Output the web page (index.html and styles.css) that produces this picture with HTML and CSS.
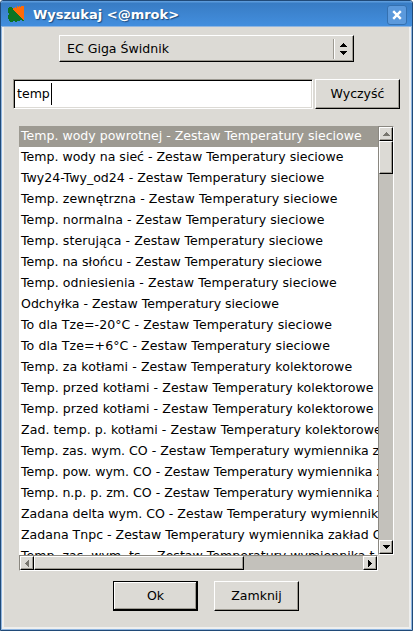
FILE: index.html
```html
<!DOCTYPE html>
<html lang="pl">
<head>
<meta charset="utf-8">
<title>Wyszukaj</title>
<link rel="stylesheet" href="styles.css">
</head>
<body>
<div class="window">
  <header class="titlebar">
    <svg class="logo" width="16" height="16" viewBox="0 0 16 16" shape-rendering="crispEdges"><path fill="#0b7424" d="M0 2h1V1h3v1h2v2l10 10v1h-2v-1h-2v1h-3v1H7v-1H5v1H2v-1H1v-2H0V9h1V7H0z"/><path fill="#ff6a08" d="M5 4V2h2V1h1v1h1V0h1v1h1V0h1v1h1V0h3v14z"/></svg>
    <h1>Wyszukaj &lt;@mrok&gt;</h1>
    <button class="close"><svg width="10" height="10" viewBox="0 0 10 10"><path d="M1.2 1.2l7.6 7.6M8.8 1.2l-7.6 7.6" stroke="#fff" stroke-width="2.4"/></svg></button>
  </header>
  <main class="content">
    <div class="combo raised"><span>EC Giga Świdnik</span><i class="divider"></i>
      <svg width="7" height="12" viewBox="0 0 7 12" shape-rendering="crispEdges"><path d="M3 0h1v1h1v1h1v1h1v1H0v-1h1v-1h1v-1h1zM0 8h7v1h-1v1h-1v1h-1v1h-1v-1h-1v-1h-1v-1h-1z"/></svg>
    </div>
    <div class="search">
      <div class="entry"><span>temp</span><i class="caret"></i></div>
      <button class="raised clear">Wyczyść</button>
    </div>
    <div class="browser">
      <ul class="list">
        <li class="selected">Temp. wody powrotnej - Zestaw Temperatury sieciowe</li>
        <li>Temp. wody na sieć - Zestaw Temperatury sieciowe</li>
        <li>Twy24-Twy_od24 - Zestaw Temperatury sieciowe</li>
        <li class="loose">Temp. zewnętrzna - Zestaw Temperatury sieciowe</li>
        <li class="loose">Temp. normalna - Zestaw Temperatury sieciowe</li>
        <li class="loose">Temp. sterująca - Zestaw Temperatury sieciowe</li>
        <li>Temp. na słońcu - Zestaw Temperatury sieciowe</li>
        <li class="loose">Temp. odniesienia - Zestaw Temperatury sieciowe</li>
        <li>Odchyłka - Zestaw Temperatury sieciowe</li>
        <li class="loose">To dla Tze=-20°C - Zestaw Temperatury sieciowe</li>
        <li class="loose">To dla Tze=+6°C - Zestaw Temperatury sieciowe</li>
        <li class="loose">Temp. za kotłami - Zestaw Temperatury kolektorowe</li>
        <li class="loose">Temp. przed kotłami - Zestaw Temperatury kolektorowe</li>
        <li class="loose">Temp. przed kotłami - Zestaw Temperatury kolektorowe</li>
        <li class="loose">Zad. temp. p. kotłami - Zestaw Temperatury kolektorowe</li>
        <li>Temp. zas. wym. CO - Zestaw Temperatury wymiennika zakład</li>
        <li>Temp. pow. wym. CO - Zestaw Temperatury wymiennika zakład</li>
        <li>Temp. n.p. p. zm. CO - Zestaw Temperatury wymiennika zakład</li>
        <li>Zadana delta wym. CO - Zestaw Temperatury wymiennika zakład</li>
        <li>Zadana Tnpc - Zestaw Temperatury wymiennika zakład CO</li>
        <li>Temp. zas. wym. ts. - Zestaw Temperatury wymiennika t.s.</li>
      </ul>
      <div class="vbar">
        <div class="step"><svg width="7" height="4" viewBox="0 0 7 4" shape-rendering="crispEdges"><path fill="#78766f" d="M3 0h1v1h1v1h1v1h1v1H0v-1h1v-1h1v-1h1z"/></svg></div>
        <div class="vthumb step"></div>
        <div class="step end"><svg width="7" height="4" viewBox="0 0 7 4" shape-rendering="crispEdges"><path d="M0 0h7v1h-1v1h-1v1h-1v1h-1v-1h-1v-1h-1v-1h-1z"/></svg></div>
      </div>
      <div class="hbar">
        <div class="step"><svg width="4" height="7" viewBox="0 0 4 7" shape-rendering="crispEdges"><path fill="#78766f" d="M4 0v7h-1v-1h-1v-1h-1v-1h-1v-1h1v-1h1v-1h1v-1z"/></svg></div>
        <div class="hthumb step"></div>
        <div class="step end"><svg width="4" height="7" viewBox="0 0 4 7" shape-rendering="crispEdges"><path d="M0 0v7h1v-1h1v-1h1v-1h1v-1h-1v-1h-1v-1h-1v-1z"/></svg></div>
      </div>
    </div>
    <footer class="actions">
      <button class="ok">Ok</button>
      <button class="raised">Zamknij</button>
    </footer>
  </main>
</div>
</body>
</html>
```
FILE: styles.css
```css
* { box-sizing: border-box; }
body {
  margin: 0;
  font: 12.56px "DejaVu Sans", sans-serif;
  color: #000;
  overflow: hidden;
}
.window {
  width: 413px;
  height: 631px;
  display: flex;
  flex-direction: column;
  background: #dcdad5;
  border: 1px solid #204a78;
  border-radius: 3px 3px 0 0;
  overflow: hidden;
}
.titlebar {
  height: 26px;
  flex: none;
  display: flex;
  align-items: center;
  padding: 2px 5px 0 7px;
  background: linear-gradient(#5b9bdc 0, #5b9bdc 1px, #387cc4 2px, #438fdf 100%);
}
.titlebar h1 {
  flex: 1;
  margin: 0 0 0 9px;
  font-size: 13px;
  line-height: 20px;
  color: #fff;
  text-shadow: 1px 1px 1px #1d4a7c;
}
.logo { margin-top: -2px; }
.close {
  width: 20px;
  height: 20px;
  display: flex;
  align-items: center;
  justify-content: center;
  padding: 0;
  border: 1px solid #3470b0;
  border-radius: 3px;
  background: #5b99dc;
}
.content {
  flex: 1;
  display: flex;
  flex-direction: column;
  padding: 8px 8px 0 9px;
  border: solid #efefee;
  border-width: 0 2px 2px;
  margin: 0 1px 1px;
  box-shadow: 0 0 0 1px #8fb5e0;
}
.raised {
  font: inherit;
  color: #000;
  padding: 0;
  background: #dcdad5;
  border: solid;
  border-width: 1px;
  border-color: #fff #000 #000 #fff;
  box-shadow: inset -1px -1px #9d9a92;
}
.combo {
  width: 295px;
  height: 27px;
  margin-left: 46px;
  padding: 0 6px 0 7px;
  display: flex;
  align-items: center;
}
.combo span { flex: 1; }
.divider {
  width: 2px;
  height: 20px;
  margin-right: 5px;
  border-left: 1px solid #9d9a92;
  border-right: 1px solid #fff;
}
.search { display: flex; gap: 2px; margin-top: 17px; }
.entry {
  width: 300px;
  height: 30px;
  display: flex;
  align-items: center;
  padding: 0 0 2px 3px;
  background: #fff;
  border: 1px solid;
  border-color: #9d9a92 #fff #fff #9d9a92;
  box-shadow: inset 1px 1px #000, inset -1px -1px #dcdad5;
}
.caret { width: 1px; height: 22px; margin: 2px 0 0 1px; background: #000; }
.clear { width: 85px; height: 30px; padding-bottom: 2px; }
.browser {
  display: grid;
  grid-template-columns: 359px 16px;
  grid-template-rows: 429px 16px;
  margin: 17px 0 0 6px;
}
.list {
  margin: 0;
  padding: 0;
  list-style: none;
  overflow: hidden;
  background: #fff;
  white-space: nowrap;
}
.list li { height: 21px; line-height: 19px; padding-left: 2px; }
.list .selected { background: #9d9a92; color: #fff; }
.list .loose { letter-spacing: 0.07px; }
.vbar, .hbar {
  display: flex;
  background: #c3c1bb;
  border: 1px solid;
  border-color: #8a8780 #fff #fff #8a8780;
}
.vbar { flex-direction: column; }
.step {
  width: 14px;
  height: 14px;
  flex: none;
  display: flex;
  align-items: center;
  justify-content: center;
  background: #dcdad5;
  border: 1px solid;
  border-color: #fff #000 #000 #fff;
  box-shadow: inset -1px -1px #9d9a92;
}
.vthumb { height: 33px; }
.hthumb { width: 210px; }
.vbar .end { margin-top: auto; }
.hbar .end { margin-left: auto; }
.actions { display: flex; gap: 16px; margin: 10px 0 0 100px; }
.actions button { width: 85px; height: 30px; padding-bottom: 2px; }
.ok {
  font: inherit;
  color: #000;
  background: #dcdad5;
  border: 1px solid #000;
  box-shadow: inset -1px -1px #000, inset 1px 1px #fff, inset -2px -2px #9d9a92;
}
```
